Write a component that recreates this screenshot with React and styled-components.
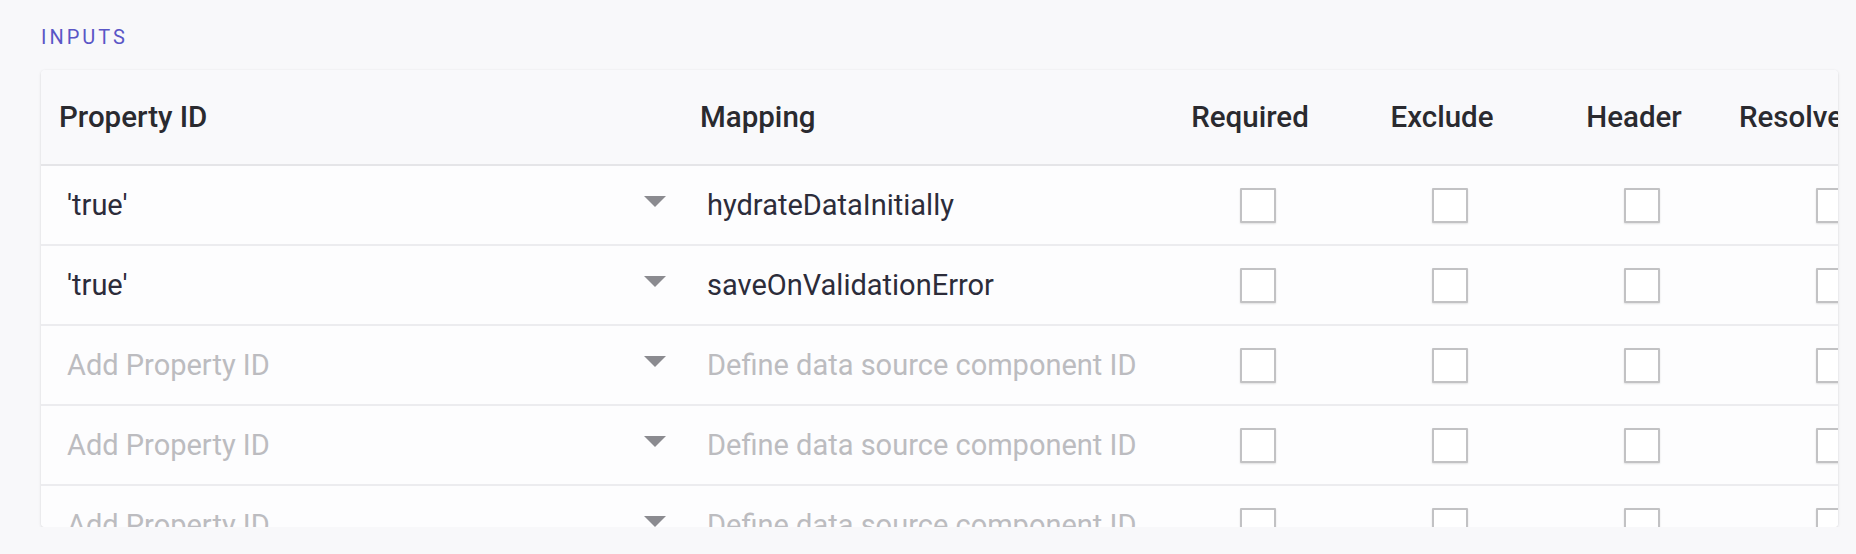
import React from 'react';
import styled, { createGlobalStyle } from 'styled-components';

const GlobalStyle = createGlobalStyle`
  body {
    margin: 0;
    font-family: Roboto, 'Noto Sans', sans-serif;
    background-color: #f8f8fa;
    color: #2c2c38;
  }
`;

const Page = styled.div`
  padding: 25px 18px 0 41px;
  display: flex;
  flex-direction: column;
  gap: 21px;
`;

const SectionTitle = styled.div`
  font-size: 20px;
  line-height: 24px;
  letter-spacing: 3px;
  color: #5a56c6;
  text-transform: uppercase;
`;

const Card = styled.div`
  height: 457px;
  overflow: hidden;
  background-color: #fdfdfe;
  border-radius: 4px;
  box-shadow: 0 1px 3px rgba(0, 0, 0, 0.13), 0 0 1px rgba(0, 0, 0, 0.08);
`;

const Row = styled.div`
  display: grid;
  grid-template-columns: 641px 472px repeat(4, 192px);
  height: ${(p) => (p.$head ? '94px' : '78px')};
  border-bottom: 2px solid ${(p) => (p.$head ? '#e5e5e8' : '#ececef')};
  background-color: ${(p) => (p.$head ? '#f9f9fb' : '#fdfdfe')};
`;

const HeadCell = styled.div`
  display: flex;
  align-items: center;
  justify-content: ${(p) => (p.$center && p.$align !== 'start' ? 'center' : 'flex-start')};
  padding-left: ${(p) => (p.$align === 'start' ? '9px' : p.$center ? '0' : '18px')};
  font-size: 29.5px;
  font-weight: 500;
  color: #2a2a2f;
  white-space: nowrap;
`;

const SelectCell = styled.div`
  display: flex;
  align-items: center;
  justify-content: space-between;
  padding: 0 16px 0 26px;
`;

const TextCell = styled.div`
  display: flex;
  align-items: center;
  padding-left: 25px;
`;

const Value = styled.span`
  font-size: 29px;
  color: ${(p) => (p.$placeholder ? '#bcbcc0' : '#2c2c3a')};
  white-space: nowrap;
`;

const Arrow = styled.span`
  width: 0;
  height: 0;
  margin-top: -7px;
  border-left: 11px solid transparent;
  border-right: 11px solid transparent;
  border-top: 11px solid #8b8b90;
`;

const CheckCell = styled.div`
  display: flex;
  align-items: center;
  justify-content: center;
`;

const Checkbox = styled.span`
  box-sizing: border-box;
  width: 36px;
  height: 35px;
  margin-left: 16px;
  border: 2px solid #c2c2c4;
  border-radius: 1px;
  background-color: #ffffff;
  box-shadow: 0 1px 2px rgba(0, 0, 0, 0.12);
`;

const flags = ['Required', 'Exclude', 'Header', 'Resolve'];

const rows = [
  { id: "'true'", mapping: 'hydrateDataInitially' },
  { id: "'true'", mapping: 'saveOnValidationError' },
  { id: null, mapping: null },
  { id: null, mapping: null },
  { id: null, mapping: null },
];

const App = () => {
  return (
    <>
      <GlobalStyle />
      <Page>
        <SectionTitle>Inputs</SectionTitle>
        <Card>
          <Row $head>
            <HeadCell>Property ID</HeadCell>
            <HeadCell>Mapping</HeadCell>
            {flags.map((f, i) => (
              <HeadCell key={f} $center $align={i === flags.length - 1 ? 'start' : undefined}>
                {f}
              </HeadCell>
            ))}
          </Row>
          {rows.map((r, i) => (
            <Row key={i}>
              <SelectCell>
                <Value $placeholder={!r.id}>{r.id || 'Add Property ID'}</Value>
                <Arrow />
              </SelectCell>
              <TextCell>
                <Value $placeholder={!r.mapping}>
                  {r.mapping || 'Define data source component ID'}
                </Value>
              </TextCell>
              {flags.map((f) => (
                <CheckCell key={f}>
                  <Checkbox />
                </CheckCell>
              ))}
            </Row>
          ))}
        </Card>
      </Page>
    </>
  );
};

export default App;
